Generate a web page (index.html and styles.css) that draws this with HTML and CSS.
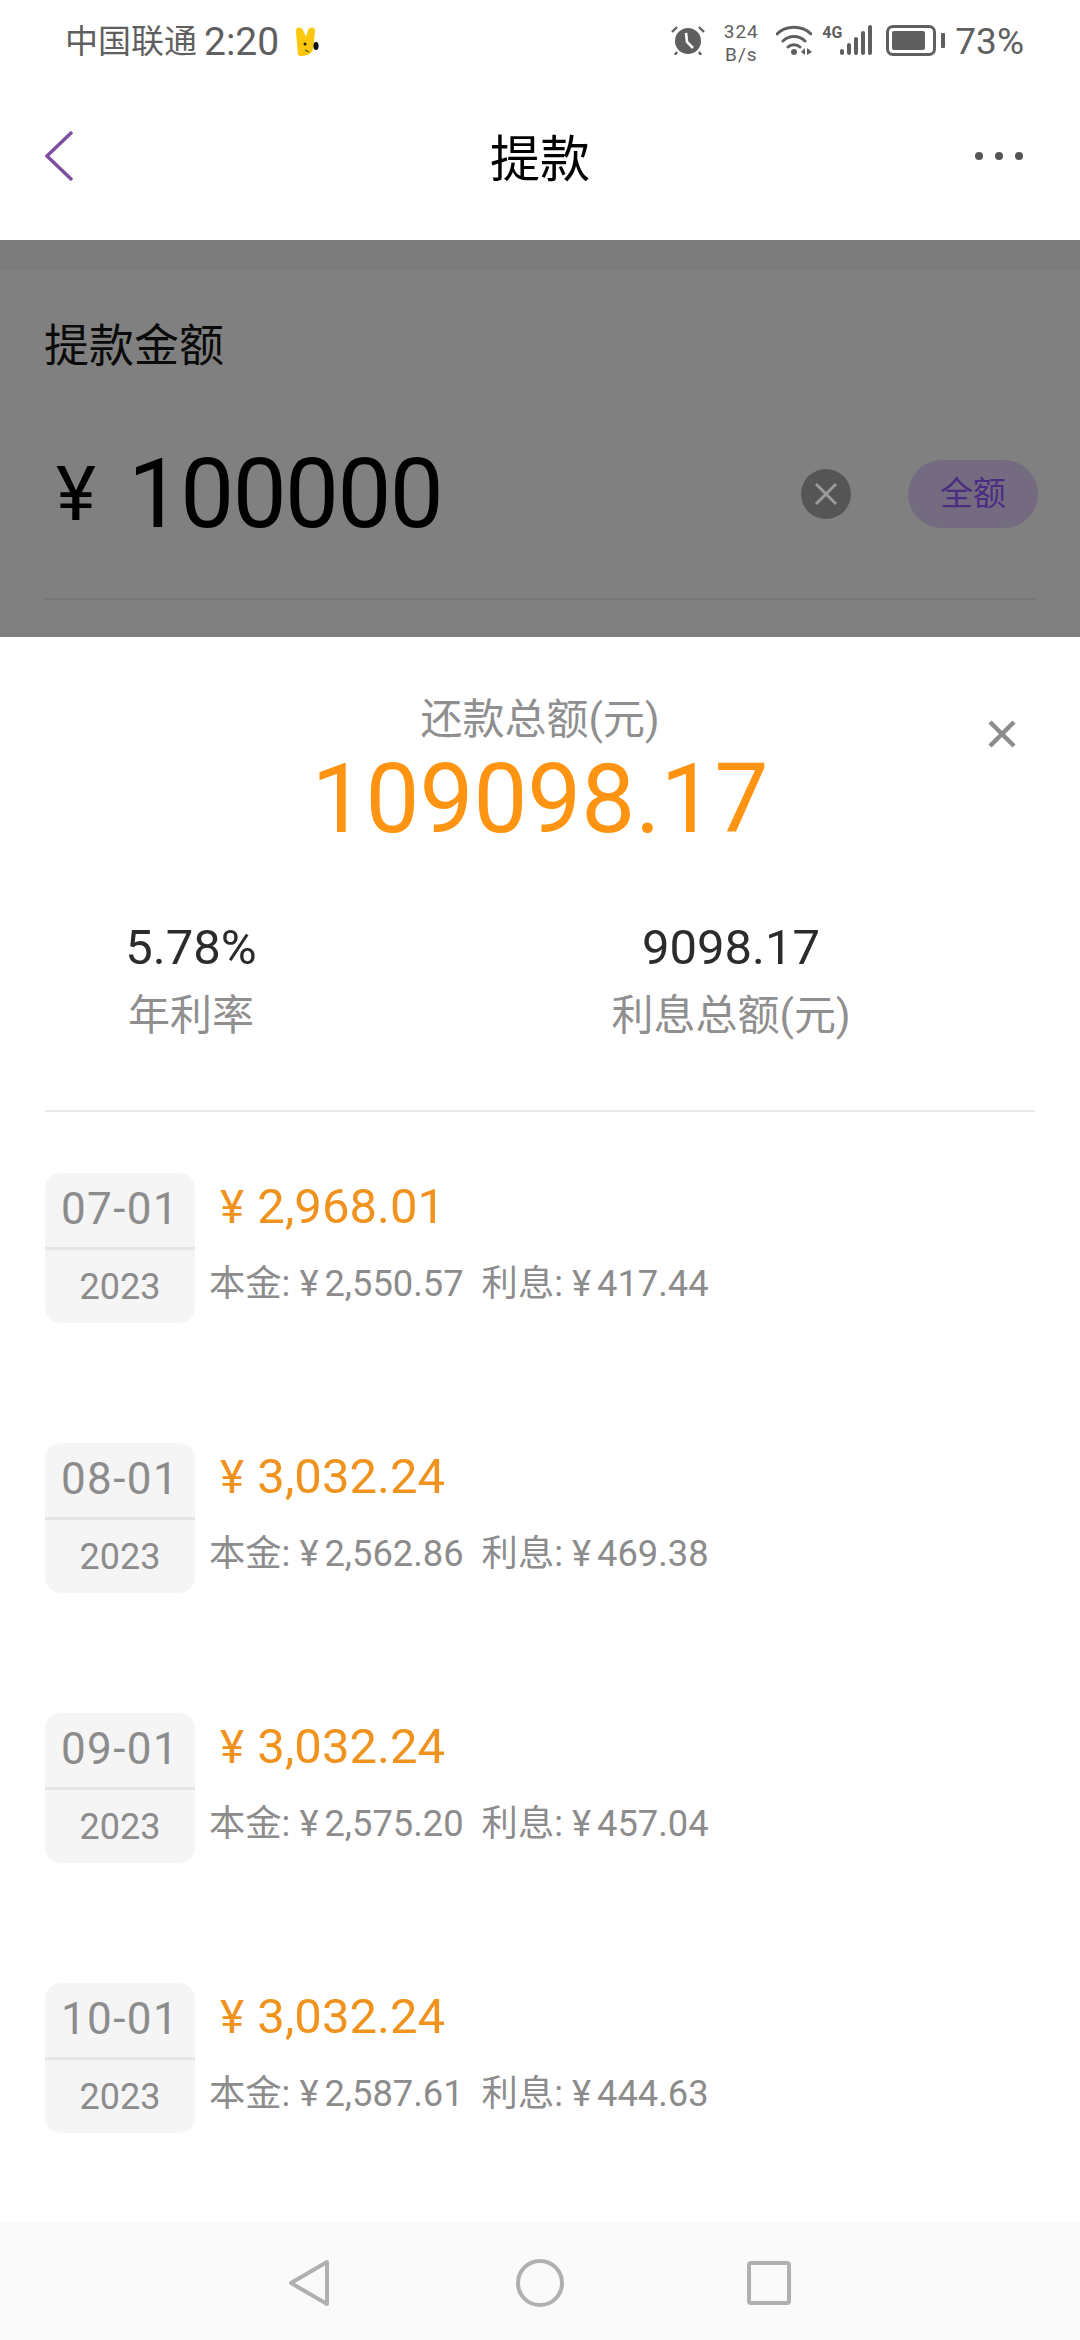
FILE: index.html
```html
<!DOCTYPE html>
<html>
<head>
    <meta charset="UTF-8">
    <title>提款</title>
    <link rel="stylesheet" href="styles.css">
</head>
<body>
    <div class="status-bar">
        <div class="status-left">
            <span class="carrier">中国联通</span>
            <span class="clock">2:20</span>
            <svg class="bunny" viewBox="0 0 25 30" width="25" height="30">
                <path d="M2 5C1 0 7-1 9 3L12 10L14 3C16-1 22 0 21 5L19 22C18 27 13 29 6 29L4 28Z" fill="#fcc70c"/>
                <ellipse cx="22" cy="19" rx="2.6" ry="4" fill="#111"/>
                <circle cx="11" cy="17" r="1.5" fill="#222"/>
                <path d="M11 23L15 25" stroke="#333" fill="none"/>
            </svg>
        </div>
        <div class="status-right">
            <svg class="alarm" viewBox="0 0 34 30" width="34" height="30">
                <circle cx="17" cy="16" r="13" fill="#5f5f5f"/>
                <path d="M1 7L6 2M33 7L28 2M6 27L4 30M28 27L30 30" stroke="#5f5f5f" stroke-width="2.4" fill="none"/>
                <path d="M15 8L16 17L22 23" stroke="#fff" stroke-width="2.6" fill="none"/>
            </svg>
            <div class="speed">324<br>B/s</div>
            <svg class="wifi" viewBox="0 0 36 30" width="36" height="30">
                <path d="M1 9C10 0 26 0 35 9M7 16C13 10 23 10 29 16M12 22C15 19 21 19 24 22" stroke="#5f5f5f" stroke-width="3" stroke-linecap="round" fill="none"/>
                <circle cx="18" cy="27" r="3" fill="#5f5f5f"/>
                <path d="M25 27L29 23V30ZM31 23L36 27L31 30Z" fill="#5f5f5f"/>
            </svg>
            <div class="signal-wrap">
                <span class="net">4G</span>
                <svg class="signal" viewBox="0 0 33 30" width="33" height="30">
                    <rect x="0" y="24" width="4" height="6" rx="2" fill="#5f5f5f"/>
                    <rect x="7" y="18" width="4" height="12" rx="2" fill="#5f5f5f"/>
                    <rect x="14" y="12" width="4" height="18" rx="2" fill="#5f5f5f"/>
                    <rect x="21" y="6" width="4" height="24" rx="2" fill="#5f5f5f"/>
                    <rect x="28" y="0" width="4" height="30" rx="2" fill="#5f5f5f"/>
                </svg>
            </div>
            <div class="battery"><div class="battery-fill"></div></div>
            <div class="battery-nub"></div>
            <span class="percent">73%</span>
        </div>
    </div>

    <div class="title-bar">
        <svg class="back" viewBox="0 0 28 50" width="28" height="50">
            <path d="M27 1L2 25L27 49" stroke="#7f4f9f" stroke-width="3.4" fill="none"/>
        </svg>
        <h1>提款</h1>
        <div class="more"><i></i><i></i><i></i></div>
    </div>

    <div class="amount-section">
        <div class="amount-label">提款金额</div>
        <div class="amount-row">
            <span class="amount-yen">¥</span>
            <span class="amount-input">100000</span>
            <svg class="clear" viewBox="0 0 50 50" width="50" height="50">
                <circle cx="25" cy="25" r="25" fill="#555"/>
                <path d="M15 15L35 35M35 15L15 35" stroke="#9a9a9a" stroke-width="3"/>
            </svg>
            <span class="all-btn">全额</span>
        </div>
        <div class="amount-line"></div>
    </div>

    <div class="sheet">
        <svg class="close" viewBox="0 0 28 28" width="28" height="28">
            <path d="M2 2L26 26M26 2L2 26" stroke="#8c8c8c" stroke-width="4.5"/>
        </svg>
        <div class="total-label">还款总额(元)</div>
        <div class="total-value">109098.17</div>
        <div class="stats">
            <div class="stat">
                <div class="stat-value">5.78%</div>
                <div class="stat-label">年利率</div>
            </div>
            <div class="stat">
                <div class="stat-value">9098.17</div>
                <div class="stat-label">利息总额(元)</div>
            </div>
        </div>

        <div class="plan">
            <div class="plan-row">
                <div class="date-box">
                    <div class="date-day">07-01</div>
                    <div class="date-year">2023</div>
                </div>
                <div class="plan-info">
                    <div class="plan-amount"><span class="yen">¥</span>2,968.01</div>
                    <div class="plan-detail">本金: <span class="yen-sm">¥</span>2,550.57 &nbsp;利息: <span class="yen-sm">¥</span>417.44</div>
                </div>
            </div>
            <div class="plan-row">
                <div class="date-box">
                    <div class="date-day">08-01</div>
                    <div class="date-year">2023</div>
                </div>
                <div class="plan-info">
                    <div class="plan-amount"><span class="yen">¥</span>3,032.24</div>
                    <div class="plan-detail">本金: <span class="yen-sm">¥</span>2,562.86 &nbsp;利息: <span class="yen-sm">¥</span>469.38</div>
                </div>
            </div>
            <div class="plan-row">
                <div class="date-box">
                    <div class="date-day">09-01</div>
                    <div class="date-year">2023</div>
                </div>
                <div class="plan-info">
                    <div class="plan-amount"><span class="yen">¥</span>3,032.24</div>
                    <div class="plan-detail">本金: <span class="yen-sm">¥</span>2,575.20 &nbsp;利息: <span class="yen-sm">¥</span>457.04</div>
                </div>
            </div>
            <div class="plan-row">
                <div class="date-box">
                    <div class="date-day">10-01</div>
                    <div class="date-year">2023</div>
                </div>
                <div class="plan-info">
                    <div class="plan-amount"><span class="yen">¥</span>3,032.24</div>
                    <div class="plan-detail">本金: <span class="yen-sm">¥</span>2,587.61 &nbsp;利息: <span class="yen-sm">¥</span>444.63</div>
                </div>
            </div>
        </div>
    </div>

    <div class="nav-bar">
        <svg viewBox="0 0 42 48" width="42" height="48">
            <path d="M39 3V45L3 24Z" stroke="#b0b0b0" stroke-width="4" stroke-linejoin="round" fill="none"/>
        </svg>
        <svg viewBox="0 0 48 48" width="48" height="48">
            <circle cx="24" cy="24" r="22" stroke="#b0b0b0" stroke-width="4" fill="none"/>
        </svg>
        <svg viewBox="0 0 44 44" width="44" height="44">
            <rect x="2" y="2" width="40" height="40" rx="2" stroke="#b0b0b0" stroke-width="4" fill="none"/>
        </svg>
    </div>
</body>
</html>
```

FILE: styles.css
```css
* { box-sizing: border-box; }
body { margin: 0; width: 1080px; height: 2340px; overflow: hidden; display: flex; flex-direction: column; background: #fff; font-family: Roboto, "Noto Sans CJK SC", sans-serif; }

.status-bar { height: 84px; flex: none; display: flex; justify-content: space-between; align-items: flex-start; padding: 25px 56px 0 65px; color: #5f5f5f; }
.status-left { display: flex; align-items: center; height: 34px; }
.carrier { font-size: 33px; line-height: 34px; }
.clock { font-size: 39px; line-height: 34px; margin-left: 7px; }
.bunny { margin-left: 15px; }
.status-right { display: flex; align-items: flex-start; }
.speed { width: 38px; margin-left: 17px; margin-top: -5px; text-align: center; font-size: 19px; letter-spacing: 1px; line-height: 23px; white-space: nowrap; }
.wifi { margin-left: 16px; }
.signal-wrap { display: flex; margin-left: 10px; }
.net { font-size: 16px; font-weight: 700; line-height: 16px; width: 17px; margin-right: 1px; }
.battery { width: 50px; height: 31px; margin-left: 13px; border: 3px solid #5f5f5f; border-radius: 7px; padding: 3px; }
.battery-fill { width: 33px; height: 19px; background: #5f5f5f; border-radius: 2px; }
.battery-nub { width: 4px; height: 15px; margin: 8px 0 0 5px; background: #5f5f5f; border-radius: 1px; }
.percent { font-size: 37px; line-height: 34px; margin-left: 10px; }

.title-bar { height: 156px; flex: none; position: relative; display: flex; justify-content: space-between; align-items: center; padding: 0 57px 12px 45px; }
.title-bar h1 { position: absolute; left: 0; right: 0; margin: -3px 0 0; font-size: 50px; font-weight: 400; color: #000; text-align: center; }
.more { display: flex; gap: 12px; }
.more i { width: 8px; height: 8px; border-radius: 50%; background: #555; }

.amount-section { height: 397px; flex: none; padding: 82px 44px 0; background: linear-gradient(#7c7c7c 30px, #808080 30px); }
.amount-label { font-size: 45px; line-height: 50px; color: #0a0a0a; }
.amount-row { display: flex; align-items: center; height: 68px; margin-top: 88px; }
.amount-yen { font-size: 76px; color: #000; width: 84px; padding-left: 12px; }
.amount-input { font-size: 96px; letter-spacing: -1.6px; color: #000; flex: 1; }
.clear { margin-right: 57px; }
.all-btn { width: 130px; height: 68px; margin-right: -2px; border-radius: 34px; background: #746b80; color: #4b2d82; font-size: 33px; line-height: 68px; text-align: center; }
.amount-line { height: 2px; margin-top: 70px; background: #767676; }

.sheet { flex: 1; position: relative; overflow: hidden; background: #fff; padding: 58px 45px 0; }
.close { position: absolute; top: 83px; right: 64px; }
.total-label { font-size: 42px; line-height: 50px; color: #8f8f8f; text-align: center; }
.total-value { font-size: 96px; line-height: 100px; margin-top: 4px; color: #ff9412; text-align: center; }
.stats { display: grid; grid-template-columns: 292px 612px; column-gap: 88px; margin-top: 69px; padding-bottom: 69px; border-bottom: 2px solid #e8e8e8; text-align: center; }
.stat-value { font-size: 49px; line-height: 60px; color: #2b2b2b; }
.stat-label { font-size: 42px; line-height: 50px; margin-top: 13px; color: #8f8f8f; }

.plan { margin-top: 61px; }
.plan-row { display: flex; height: 150px; margin-bottom: 120px; }
.date-box { width: 150px; height: 150px; flex: none; border-radius: 16px; background: #f5f5f5; text-align: center; color: #8c8c8c; }
.date-day { height: 77px; font-size: 44px; letter-spacing: 1.4px; line-height: 73px; border-bottom: 3px solid #e6e6e6; }
.date-year { font-size: 36px; line-height: 74px; }
.plan-info { margin-left: 14px; padding-top: 4px; }
.plan-amount { font-size: 49px; line-height: 60px; margin-left: 11px; color: #f0931e; }
.yen { margin-right: 13px; font-size: 46px; }
.plan-detail { font-size: 36.3px; line-height: 50px; margin-top: 22px; color: #8c8c8c; white-space: nowrap; }
.yen-sm { margin-right: 6px; }

.nav-bar { height: 117px; flex: none; display: flex; align-items: center; background: #fafafa; padding: 2px 289px 0 288px; justify-content: space-between; }
.nav-bar svg:nth-child(2) { margin-left: 2px; }
```
